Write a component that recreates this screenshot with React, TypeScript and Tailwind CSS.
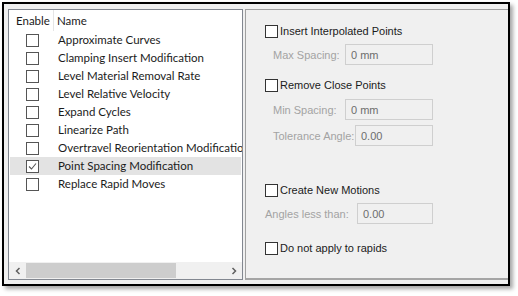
import React from 'react';

const items = [
  'Approximate Curves',
  'Clamping Insert Modification',
  'Level Material Removal Rate',
  'Level Relative Velocity',
  'Expand Cycles',
  'Linearize Path',
  'Overtravel Reorientation Modification',
  'Point Spacing Modification',
  'Replace Rapid Moves',
];

function Box({ checked = false, dark = false }: { checked?: boolean; dark?: boolean }) {
  return (
    <div
      className={`w-[13px] h-[13px] shrink-0 bg-white border ${dark ? 'border-[#333333]' : 'border-[#555555]'} flex items-center justify-center`}
    >
      {checked && (
        <svg width="9" height="9" viewBox="0 0 9 9">
          <path d="M1 4.5 L3.5 7 L8 1.5" fill="none" stroke="#555" strokeWidth="1.1" />
        </svg>
      )}
    </div>
  );
}

function OptionRow({ label, className = '' }: { label: string; className?: string }) {
  return (
    <div className={`flex items-center h-[16px] pl-[19px] ${className}`}>
      <Box dark />
      <span className="ml-[2px] whitespace-nowrap text-[#1b1b1b]">{label}</span>
    </div>
  );
}

function Field({ label, value, labelW, inputW, pl, className = '' }: { label: string; value: string; labelW: string; inputW: string; pl: string; className?: string }) {
  return (
    <div className={`flex items-center ${pl} ${className}`}>
      <span className={`${labelW} shrink-0 whitespace-nowrap text-[#a3a3a3]`}>{label}</span>
      <div className={`${inputW} h-[21px] shrink-0 border border-[#cfcfcf] bg-[#f0f0f0] flex items-center pl-[5px] text-[#6d6d6d]`}>
        {value}
      </div>
    </div>
  );
}

export default function App() {
  return (
    <div className="w-[518px] h-[296px] bg-white pt-[2px] pl-[2px]">
      <div className="w-[508px] h-[284px] border-2 border-black bg-[#f0f0f0] shadow-[3px_3px_4px_rgba(0,0,0,0.35)] flex pt-[5px] pl-[4px] pb-[4px] gap-[2px] overflow-hidden">
        {/* Filter list */}
        <div
          className="w-[235px] shrink-0 h-full border border-[#828790] bg-white flex flex-col text-[11.5px] leading-[16px]"
          style={{ fontFamily: 'Lato, "Noto Sans", sans-serif' }}
        >
          <div className="flex h-[21px] items-center">
            <div className="w-[45px] shrink-0 h-full flex items-center pl-[7px] border-r border-[#e5e5e5] text-[#1b1b1b]">Enable</div>
            <div className="pl-[3px] text-[#1b1b1b]">Name</div>
          </div>
          <div className="flex-1 overflow-hidden">
            {items.map((name, i) => (
              <div
                key={name}
                className={`flex items-center h-[18px] mx-[1px] ${i === 7 ? 'bg-[#e3e3e3]' : ''}`}
              >
                <div className="w-[48px] shrink-0 pl-[16px]">
                  <Box checked={i === 7} />
                </div>
                <span className="whitespace-nowrap text-[#1b1b1b]">{name}</span>
              </div>
            ))}
          </div>
          {/* horizontal scrollbar */}
          <div className="h-[17px] bg-[#f0f0f0] flex items-center">
            <div className="w-[17px] flex justify-center">
              <svg width="6" height="8" viewBox="0 0 6 8">
                <path d="M4.5 1 L1.5 4 L4.5 7" fill="none" stroke="#606060" strokeWidth="1.5" />
              </svg>
            </div>
            <div className="w-[150px] h-[15px] bg-[#cdcdcd]" />
            <div className="flex-1" />
            <div className="w-[17px] flex justify-center">
              <svg width="6" height="8" viewBox="0 0 6 8">
                <path d="M1.5 1 L4.5 4 L1.5 7" fill="none" stroke="#606060" strokeWidth="1.5" />
              </svg>
            </div>
          </div>
        </div>

        {/* Options */}
        <div
          className="flex-1 h-[271px] border-l border-t border-[#a0a0a0] border-b-2 border-b-[#a5a5a5] flex flex-col text-[11px] leading-[14px]"
          style={{ fontFamily: '"Liberation Sans", Arial, sans-serif' }}
        >
          <OptionRow label="Insert Interpolated Points" className="mt-[13px]" />
          <Field label="Max Spacing:" value="0 mm" labelW="w-[72px]" inputW="w-[88px]" pl="pl-[27px]" className="mt-[5px]" />
          <OptionRow label="Remove Close Points" className="mt-[12px]" />
          <Field label="Min Spacing:" value="0 mm" labelW="w-[72px]" inputW="w-[88px]" pl="pl-[27px]" className="mt-[6px]" />
          <Field label="Tolerance Angle:" value="0.00" labelW="w-[82px]" inputW="w-[78px]" pl="pl-[27px]" className="mt-[5px]" />
          <OptionRow label="Create New Motions" className="mt-[36px]" />
          <Field label="Angles less than:" value="0.00" labelW="w-[92px]" inputW="w-[76px]" pl="pl-[19px]" className="mt-[5px]" />
          <OptionRow label="Do not apply to rapids" className="mt-[16px]" />
        </div>
      </div>
    </div>
  );
}
